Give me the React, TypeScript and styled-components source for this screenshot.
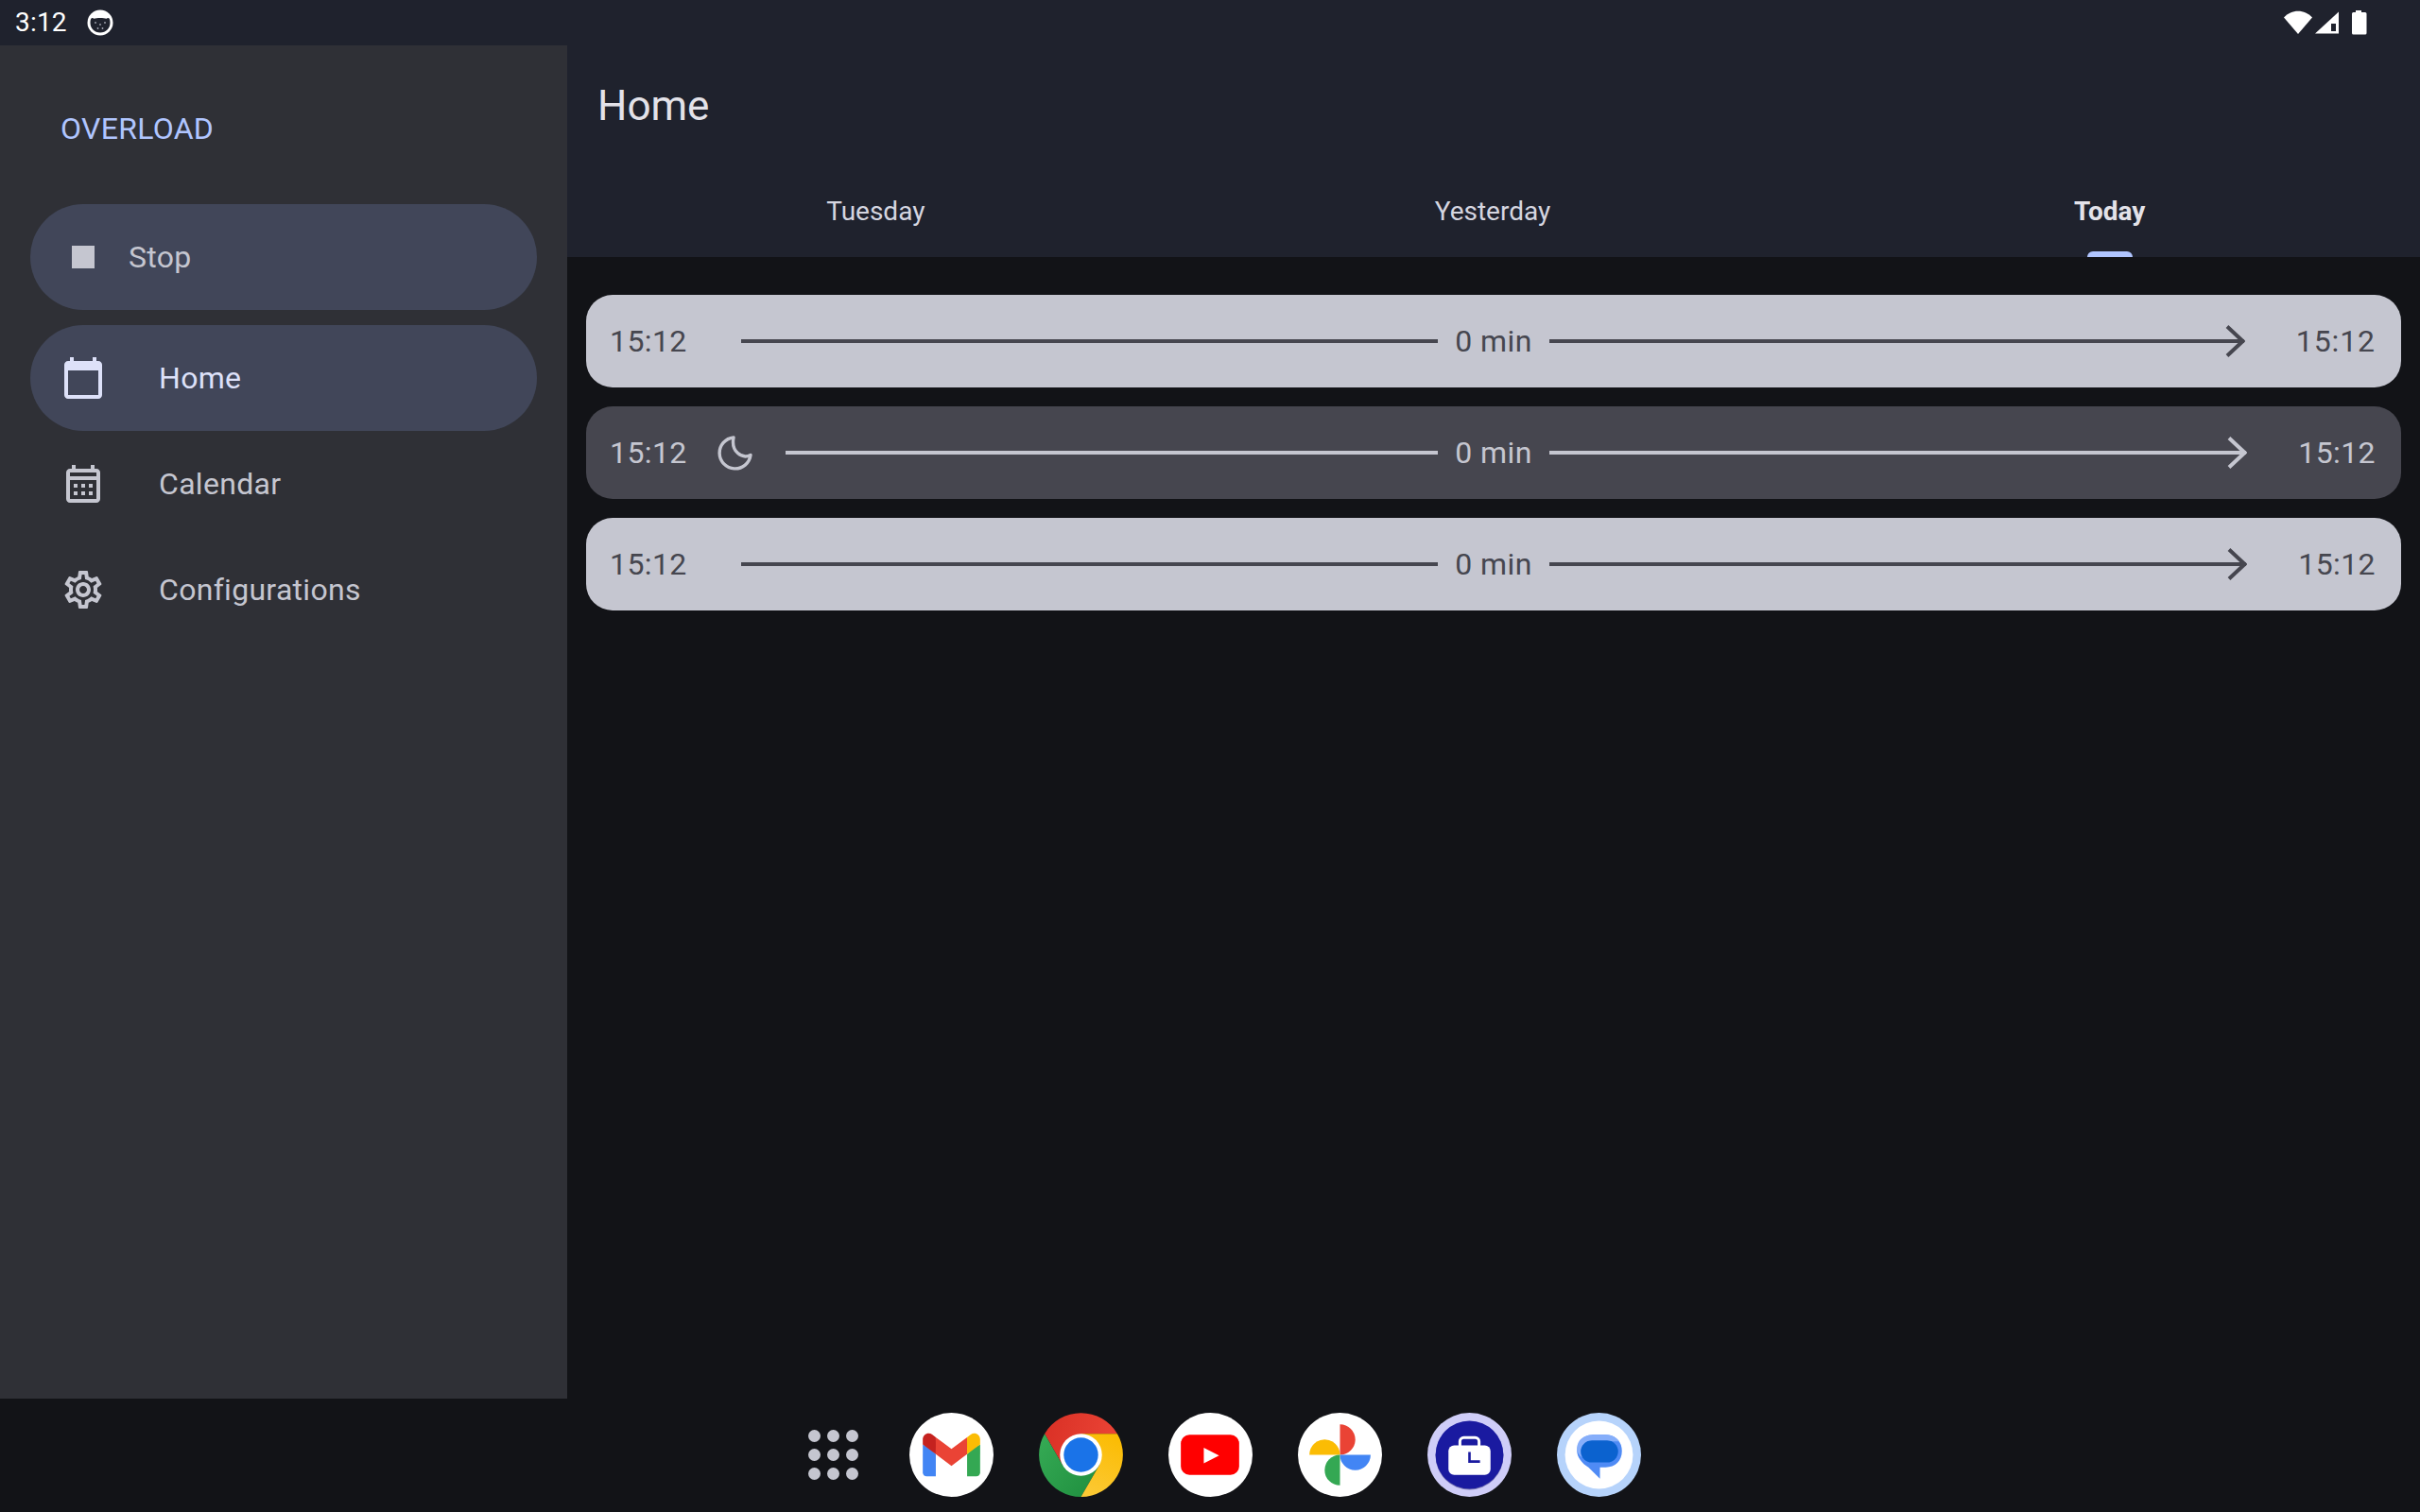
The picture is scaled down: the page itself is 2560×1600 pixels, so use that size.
import React from "react";
import styled, { createGlobalStyle } from "styled-components";

const Global = createGlobalStyle`
  html, body { margin: 0; padding: 0; background: #121317; }
  * { box-sizing: border-box; }
  body { font-family: Roboto, "Liberation Sans", sans-serif; }
`;

const Screen = styled.div`
  width: 2560px;
  height: 1600px;
  display: flex;
  flex-direction: column;
  background: #121317;
  overflow: hidden;
`;

const StatusBar = styled.header`
  height: 48px;
  flex: none;
  display: flex;
  align-items: center;
  justify-content: space-between;
  padding: 0 56px 0 16px;
  background: #1f222d;
  color: #fff;
`;
const StatusLeft = styled.div`
  display: flex;
  align-items: center;
  gap: 21px;
`;
const Clock = styled.span`
  font-size: 28px;
  line-height: 48px;
  letter-spacing: 0.2px;
`;
const StatusRight = styled.div`
  display: flex;
  align-items: center;
`;

const Body = styled.div`
  flex: 1;
  min-height: 0;
  display: flex;
`;

const Drawer = styled.nav`
  width: 600px;
  flex: none;
  display: flex;
  flex-direction: column;
  padding: 0 32px;
  background: #2f3036;
  letter-spacing: 0.3px;
`;
const DrawerLabel = styled.div`
  height: 168px;
  padding: 7px 0 0 32px;
  display: flex;
  align-items: center;
  font-size: 32px;
  color: #b0c5ff;
`;
const StopPill = styled.div`
  height: 112px;
  display: flex;
  align-items: center;
  gap: 24px;
  padding-left: 32px;
  margin-bottom: 16px;
  border-radius: 56px;
  background: #414659;
  color: #c5c6d0;
  font-size: 32px;
`;
const NavItem = styled.div<{ $active?: boolean }>`
  height: 112px;
  display: flex;
  align-items: center;
  gap: 56px;
  padding-left: 32px;
  border-radius: 56px;
  background: ${(p) => (p.$active ? "#414659" : "transparent")};
  color: ${(p) => (p.$active ? "#dde1f9" : "#c5c6d0")};
  font-size: 32px;
`;

const Main = styled.main`
  flex: 1;
  min-width: 0;
  display: flex;
  flex-direction: column;
`;
const AppBar = styled.div`
  height: 128px;
  display: flex;
  align-items: center;
  padding-left: 32px;
  background: #1f222d;
`;
const Title = styled.h1`
  margin: 0;
  font-size: 44px;
  font-weight: 400;
  color: #e3e2e9;
`;
const Tabs = styled.div`
  height: 96px;
  display: flex;
  padding-right: 2px;
  background: #1f222d;
`;
const Tab = styled.div<{ $active?: boolean }>`
  position: relative;
  flex: 1;
  display: flex;
  align-items: center;
  justify-content: center;
  padding-bottom: 2px;
  font-size: 28px;
  font-weight: ${(p) => (p.$active ? 700 : 400)};
  color: ${(p) => (p.$active ? "#e3e2e9" : "#d5d6e0")};
`;
const TabIndicator = styled.span`
  position: absolute;
  left: 50%;
  bottom: 0;
  width: 48px;
  height: 6px;
  margin-left: -24px;
  border-radius: 6px 6px 0 0;
  background: #b0c5ff;
`;

const List = styled.div`
  display: flex;
  flex-direction: column;
  gap: 20px;
  padding: 40px 20px 0;
`;
const Row = styled.div<{ $dark?: boolean }>`
  height: 98px;
  display: grid;
  grid-template-columns: 1fr auto 1fr;
  align-items: center;
  column-gap: 18px;
  padding: 0 25px;
  border-radius: 28px;
  background: ${(p) => (p.$dark ? "#46464f" : "#c5c6d0")};
  color: ${(p) => (p.$dark ? "#c5c6d0" : "#46464f")};
  font-size: 32px;
  line-height: 40px;
  letter-spacing: 0.4px;
`;
const RowStart = styled.div<{ $compact?: boolean }>`
  display: flex;
  align-items: center;
  gap: ${(p) => (p.$compact ? "32px" : "57px")};
`;
const RowEnd = styled.div`
  display: flex;
  align-items: center;
  gap: 54px;
  padding-right: 2px;
`;
const Time = styled.span<{ $wide?: boolean }>`
  flex: none;
  letter-spacing: ${(p) => (p.$wide ? "0.9px" : "0.4px")};
`;
const Line = styled.span`
  flex: 1;
  height: 4px;
  background: currentColor;
`;
const Connector = styled.div`
  flex: 1;
  display: flex;
  align-items: center;
`;
const ArrowHead = styled.svg`
  flex: none;
  margin-left: -20px;
`;
const MoonGlyph = styled.svg`
  flex: none;
  margin-right: 2px;
`;

const Dock = styled.footer`
  height: 120px;
  flex: none;
  display: flex;
  align-items: center;
  gap: 48px;
  padding: 0 0 2px 855px;
  background: #121317;
  & > svg {
    width: 89px;
    height: 89px;
  }
`;
const AppGrid = styled.div`
  display: grid;
  grid-template-columns: repeat(3, 13px);
  gap: 7px;
  margin-right: 6px;
`;
const AppDot = styled.span`
  width: 13px;
  height: 13px;
  border-radius: 50%;
  background: #c5c6d0;
`;

const Icon = ({ d }: { d: string }) => (
  <svg width="48" height="48" viewBox="0 0 24 24" fill="currentColor" style={{ flex: "none" }}>
    <path d={d} />
  </svg>
);

const P = {
  stop: "M6 6h12v12H6z",
  today:
    "M20 3h-1V1h-2v2H7V1H5v2H4c-1.1 0-2 .9-2 2v16c0 1.1.9 2 2 2h16c1.1 0 2-.9 2-2V5c0-1.1-.9-2-2-2zm0 18H4V8h16v13z",
  month:
    "M19 4h-1V2h-2v2H8V2H6v2H5c-1.1 0-2 .9-2 2v14c0 1.1.9 2 2 2h14c1.1 0 2-.9 2-2V6c0-1.1-.9-2-2-2zm0 16H5V10h14v10zm0-12H5V6h14v2zM9 14H7v-2h2v2zm4 0h-2v-2h2v2zm4 0h-2v-2h2v2zm-8 4H7v-2h2v2zm4 0h-2v-2h2v2zm4 0h-2v-2h2v2z",
  gear:
    "M19.43 12.98c.04-.32.07-.64.07-.98 0-.34-.03-.66-.07-.98l2.11-1.65c.19-.15.24-.42.12-.64l-2-3.46c-.09-.16-.26-.25-.44-.25-.06 0-.12.01-.17.03l-2.49 1c-.52-.4-1.08-.73-1.69-.98l-.38-2.65C14.46 2.18 14.25 2 14 2h-4c-.25 0-.46.18-.49.42l-.38 2.65c-.61.25-1.17.59-1.69.98l-2.49-1c-.06-.02-.12-.03-.18-.03-.17 0-.34.09-.43.25l-2 3.46c-.13.22-.07.49.12.64l2.11 1.65c-.04.32-.07.65-.07.98 0 .33.03.66.07.98l-2.11 1.65c-.19.15-.24.42-.12.64l2 3.46c.09.16.26.25.44.25.06 0 .12-.01.17-.03l2.49-1c.52.4 1.08.73 1.69.98l.38 2.65c.03.24.24.42.49.42h4c.25 0 .46-.18.49-.42l.38-2.65c.61-.25 1.17-.59 1.69-.98l2.49 1c.06.02.12.03.18.03.17 0 .34-.09.43-.25l2-3.46c.12-.22.07-.49-.12-.64l-2.11-1.65zm-1.98-1.71c.04.31.05.52.05.73 0 .21-.02.43-.05.73l-.14 1.13.89.7 1.08.84-.7 1.21-1.27-.51-1.04-.42-.9.68c-.43.32-.84.56-1.25.73l-1.06.43-.16 1.13-.2 1.35h-1.4l-.19-1.35-.16-1.13-1.06-.43c-.43-.18-.83-.41-1.23-.71l-.91-.7-1.06.43-1.27.51-.7-1.21 1.08-.84.89-.7-.14-1.13c-.03-.31-.05-.54-.05-.74s.02-.43.05-.73l.14-1.13-.89-.7-1.08-.84.7-1.21 1.27.51 1.04.42.9-.68c.43-.32.84-.56 1.25-.73l1.06-.43.16-1.13.2-1.35h1.39l.19 1.35.16 1.13 1.06.43c.43.18.83.41 1.23.71l.91.7 1.06-.43 1.27-.51.7 1.21-1.07.85-.89.7.14 1.13zM12 8c-2.21 0-4 1.79-4 4s1.79 4 4 4 4-1.79 4-4-1.79-4-4-4zm0 6c-1.1 0-2-.9-2-2s.9-2 2-2 2 .9 2 2-.9 2-2 2z",
};

const Arrow = () => (
  <ArrowHead width="21" height="36" viewBox="0 0 21 36" fill="none" stroke="currentColor" strokeWidth="4">
    <path d="M2 2.5 L18.5 18 L2 33.5" />
  </ArrowHead>
);

const Moon = () => (
  <MoonGlyph width="38" height="38" viewBox="0 0 38 38" fill="none" stroke="currentColor" strokeWidth="3.4" strokeLinejoin="round">
    <path d="M17 3 A16.5 16.5 0 1 0 35 21.5 C26 26 14 18 17 3 Z" />
  </MoonGlyph>
);

const Face = () => (
  <svg width="28" height="30" viewBox="0 0 28 30">
    <circle cx="14" cy="15" r="13.5" fill="#fff" />
    <path d="M3.5 15 C3.5 10.500 5 9 7.500 10.800 C10 9.800 18 9.800 20.500 10.800 C23 9 24.500 10.500 24.500 15 C24.500 21 20 25.500 14 25.500 C8 25.500 3.500 21 3.500 15Z" fill="#1f222d" />
    <g fill="#a5a7b3">
      <circle cx="9" cy="15" r="0.9" />
      <circle cx="14" cy="17" r="0.9" />
      <circle cx="19" cy="15" r="0.9" />
      <circle cx="11.500" cy="21" r="0.9" />
      <circle cx="16.500" cy="21" r="0.9" />
    </g>
  </svg>
);

const SysIcons = () => (
  <svg width="88" height="26" viewBox="0 0 88 26">
    <path d="M0 7.500 C8 -1.500 22 -1.500 30 7.500 L15 25 Z" fill="#fff" />
    <path d="M33 24.500 L58 1.500 V24.500 Z" fill="#fff" />
    <path d="M50 14 H55 V22 H50 Z" fill="#1f222d" />
    <path d="M72 3.500 a1.500 1.500 0 0 1 1.500 -1.500 H76 V0 H82 V2 H86 a1.500 1.500 0 0 1 1.500 1.500 V24 a1.500 1.500 0 0 1 -1.500 1.500 H73.500 a1.500 1.500 0 0 1 -1.500 -1.500 Z" fill="#fff" />
  </svg>
);

const Gmail = () => (
  <svg width="88" height="88" viewBox="0 0 88 88">
    <circle cx="44" cy="44" r="44" fill="#fff" />
    <g transform="translate(14 21.500) scale(0.2344)">
      <path d="M58.182 192.05V93.14L27.507 65.077 0 49.504v125.091c0 9.658 7.825 17.455 17.455 17.455h40.727z" fill="#4285F4" />
      <path d="M197.818 192.05h40.727c9.659 0 17.455-7.826 17.455-17.455V49.505l-31.156 17.837-27.026 25.798v98.91z" fill="#34A853" />
      <path d="M58.182 93.14l-4.174-38.647 4.174-36.989L128 69.868l69.818-52.364 4.669 34.992-4.669 40.644L128 145.504z" fill="#EA4335" />
      <path d="M197.818 17.504V93.14L256 49.504V26.231c0-21.585-24.64-33.89-41.89-20.945l-16.292 12.218z" fill="#FBBC04" />
      <path d="M0 49.504l26.759 20.07L58.182 93.14V17.504L41.89 5.286C24.61-7.66 0 4.646 0 26.23v23.273z" fill="#C5221F" />
    </g>
  </svg>
);

const Chrome = () => (
  <svg width="88" height="88" viewBox="0 0 88 88">
    <defs>
      <linearGradient id="cr" x1="0" y1="0" x2="1" y2="0.2">
        <stop offset="0" stopColor="#d93025" />
        <stop offset="1" stopColor="#ea4335" />
      </linearGradient>
      <linearGradient id="cg" x1="1" y1="1" x2="0" y2="0.2">
        <stop offset="0" stopColor="#1e8e3e" />
        <stop offset="1" stopColor="#34a853" />
      </linearGradient>
      <linearGradient id="cy" x1="0.3" y1="1" x2="0.6" y2="0">
        <stop offset="0" stopColor="#fcc934" />
        <stop offset="1" stopColor="#fbbc04" />
      </linearGradient>
    </defs>
    <path d="M44 22 H82 A44 44 0 0 0 6 22 L25 55 Z" fill="url(#cr)" />
    <path d="M6 22 A44 44 0 0 0 44 88 L63 55 H25 Z" fill="url(#cg)" />
    <path d="M82 22 H44 L63 55 L44 88 A44 44 0 0 0 82 22 Z" fill="url(#cy)" />
    <circle cx="44" cy="44" r="22" fill="#fff" />
    <circle cx="44" cy="44" r="18" fill="#1a73e8" />
  </svg>
);

const YouTube = () => (
  <svg width="88" height="88" viewBox="0 0 88 88">
    <circle cx="44" cy="44" r="44" fill="#fff" />
    <rect x="13" y="23" width="61" height="42" rx="9" fill="#f00" />
    <path d="M37 36.500 L53 44.800 L37 53 Z" fill="#fff" />
  </svg>
);

const Photos = () => (
  <svg width="88" height="88" viewBox="0 0 88 88">
    <circle cx="44" cy="44" r="44" fill="#fff" />
    <path d="M44 12 A16 16 0 0 1 44 44 Z" fill="#ea4335" />
    <path d="M12 44 A16 16 0 0 1 44 44 Z" fill="#fbbc04" />
    <path d="M44 76 A16 16 0 0 1 44 44 Z" fill="#34a853" />
    <path d="M76 44 A16 16 0 0 1 44 44 Z" fill="#4285f4" />
  </svg>
);

const WorkClock = () => (
  <svg width="88" height="88" viewBox="0 0 88 88">
    <circle cx="44" cy="44" r="44" fill="#cfcdf8" />
    <circle cx="44" cy="45" r="35.500" fill="#0d0d5e" opacity="0.45" />
    <circle cx="44" cy="44" r="35.500" fill="#1a1aa0" />
    <rect x="34" y="26" width="20" height="12" rx="4" fill="none" stroke="#fff" strokeWidth="3" />
    <rect x="22" y="34" width="44" height="31" rx="6" fill="#fff" />
    <path d="M44 41 V51 H55" fill="none" stroke="#1a1aa0" strokeWidth="2.600" />
  </svg>
);

const Messages = () => (
  <svg width="88" height="88" viewBox="0 0 88 88">
    <circle cx="44" cy="44" r="44" fill="#b6d3fb" />
    <circle cx="44" cy="44" r="35.500" fill="#fff" />
    <path d="M38 23 H51 C61 23 68 30 68 40 C68 50 61 57 51 57 H45 V69 L33 57 C26 53 21 46 21 40 C21 30 28 23 38 23 Z" fill="#4f8bf5" />
    <path d="M38 23 H51 C57 23 62 25.500 65 30 H36 C28 30 25 36 25 41 C25 43 25.500 45 26.500 47 C23 44.500 21 41 21 37 C21 29 28 23 38 23 Z" fill="#86aefa" />
    <rect x="25" y="29" width="39" height="23" rx="11.500" fill="#0b62cf" />
  </svg>
);

const TimeRow = ({ dark, moon, wide }: { dark?: boolean; moon?: boolean; wide?: boolean }) => (
  <Row $dark={dark}>
    <RowStart $compact={moon}>
      <Time>15:12</Time>
      {moon && <Moon />}
      <Line />
    </RowStart>
    <span>0 min</span>
    <RowEnd>
      <Connector>
        <Line />
        <Arrow />
      </Connector>
      <Time $wide={wide}>15:12</Time>
    </RowEnd>
  </Row>
);

export default function App() {
  return (
    <Screen>
      <Global />
      <StatusBar>
        <StatusLeft>
          <Clock>3:12</Clock>
          <Face />
        </StatusLeft>
        <StatusRight>
          <SysIcons />
        </StatusRight>
      </StatusBar>
      <Body>
        <Drawer>
          <DrawerLabel>OVERLOAD</DrawerLabel>
          <StopPill>
            <Icon d={P.stop} />
            Stop
          </StopPill>
          <NavItem $active>
            <Icon d={P.today} />
            Home
          </NavItem>
          <NavItem>
            <Icon d={P.month} />
            Calendar
          </NavItem>
          <NavItem>
            <Icon d={P.gear} />
            Configurations
          </NavItem>
        </Drawer>
        <Main>
          <AppBar>
            <Title>Home</Title>
          </AppBar>
          <Tabs>
            <Tab>Tuesday</Tab>
            <Tab>Yesterday</Tab>
            <Tab $active>
              Today
              <TabIndicator />
            </Tab>
          </Tabs>
          <List>
            <TimeRow wide />
            <TimeRow dark moon />
            <TimeRow />
          </List>
        </Main>
      </Body>
      <Dock>
        <AppGrid>
          {Array.from({ length: 9 }, (_, i) => (
            <AppDot key={i} />
          ))}
        </AppGrid>
        <Gmail />
        <Chrome />
        <YouTube />
        <Photos />
        <WorkClock />
        <Messages />
      </Dock>
    </Screen>
  );
}
